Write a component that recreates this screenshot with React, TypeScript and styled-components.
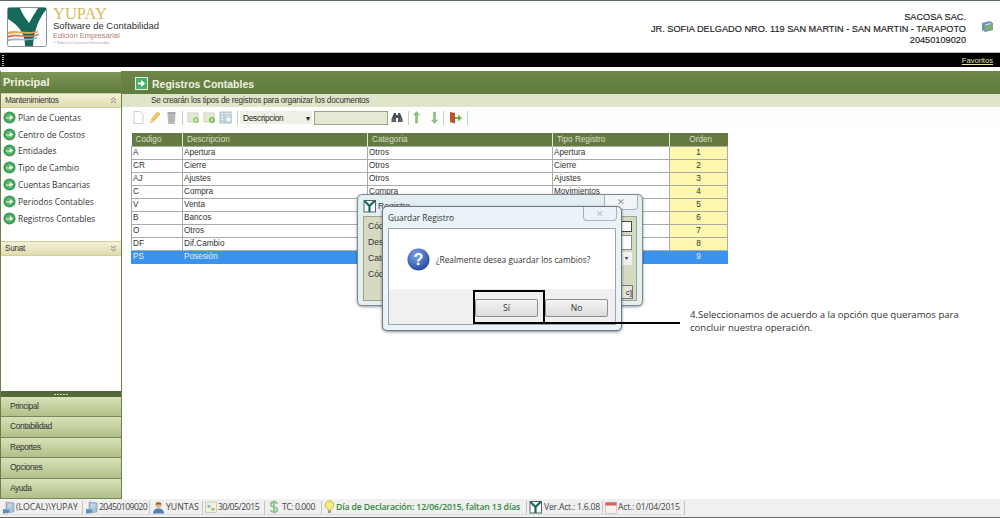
import React from 'react';
import styled, {createGlobalStyle} from 'styled-components';

const GlobalStyle = createGlobalStyle`
    html, body {
        margin: 0;
        padding: 0;
        background: #fff;
    }
`;

const Page = styled.div`
    position: relative;
    width: 1000px;
    height: 518px;
    overflow: hidden;
    display: flex;
    flex-direction: column;
    font-family: "Liberation Sans", Arial, sans-serif;
    color: #222;
    background: #fff;
`;

const TopEdge = styled.div`
    height: 1px;
    background: #5d6a6a;
`;

const Header = styled.header`
    height: 52px;
    display: flex;
    justify-content: space-between;
    padding: 6px 6px 0 7px;
    box-sizing: border-box;
    border-bottom: 1px solid #bbb;
`;

const Brand = styled.div`
    display: flex;
    gap: 6px;
`;

const BrandText = styled.div`
    display: flex;
    flex-direction: column;
`;

const BrandName = styled.div`
    font-family: "Liberation Serif", serif;
    font-size: 16.5px;
    line-height: 14px;
    color: #d8bb5c;
`;

const BrandLine = styled.div`
    font-size: 9.5px;
    line-height: 10px;
    color: #333;
`;

const BrandEdition = styled.div`
    font-size: 7.5px;
    line-height: 9px;
    color: #b5806e;
`;

const BrandSmall = styled.div`
    font-size: 3.7px;
    line-height: 6px;
    color: #b99;
`;

const Company = styled.div`
    display: flex;
    gap: 15px;
    align-items: flex-start;
`;

const CompanyText = styled.div`
    text-align: right;
    font-size: 9.2px;
    line-height: 11.6px;
    color: #222;
    -webkit-text-stroke: 0.15px #222;
    padding-top: 5px;
`;

const CompanyIconSlot = styled.div`
    padding-top: 12px;
`;

const BlackBar = styled.div`
    height: 14px;
    background: #000;
    display: flex;
    justify-content: space-between;
    align-items: center;
    padding: 0 7px 0 2px;
`;

const Grip = styled.div`
    width: 2px;
    height: 11px;
    background: repeating-linear-gradient(#bbb 0 1px, transparent 1px 2px);
`;

const Favoritos = styled.a`
    font-size: 7.6px;
    color: #e8e3a8;
    text-decoration: underline;
`;

const Body = styled.div`
    flex: 1;
    display: flex;
    margin-top: 4px;
    min-height: 0;
`;

const Sidebar = styled.aside`
    width: 122px;
    flex: none;
    display: flex;
    flex-direction: column;
    box-sizing: border-box;
    border-left: 1px solid #6b7f4e;
    border-right: 1px solid #6b7f4e;
`;

const SidebarTitle = styled.div`
    height: 21px;
    margin-top: 1px;
    background: linear-gradient(#7e9657, #5f7a3e);
    color: #eef3df;
    font-size: 11px;
    font-weight: bold;
    line-height: 21px;
    padding-left: 2px;
`;

const Section = styled.div`
    height: 15px;
    display: flex;
    justify-content: space-between;
    align-items: center;
    padding: 0 4px 0 4px;
    background: linear-gradient(#f5f1d8, #dfdcae);
    border-top: 1px solid #cfcf9f;
    border-bottom: 1px solid #cfcf9f;
    box-sizing: border-box;
    font-size: 8.2px;
    letter-spacing: -0.3px;
    color: #333;
`;

const ItemList = styled.div`
    height: 133px;
    padding-top: 1px;
    display: flex;
    flex-direction: column;
    box-sizing: border-box;
`;

const Item = styled.div`
    height: 16.8px;
    display: flex;
    align-items: center;
    gap: 2px;
    padding-left: 2px;
    font-family: "Open Sans", sans-serif;
    font-size: 8.4px;
    color: #333;
`;

const SidebarSpace = styled.div`
    flex: 1;
`;

const Splitter = styled.div`
    height: 6px;
    background: #54693a;
    display: flex;
    justify-content: center;
    align-items: center;
`;

const SplitterDots = styled.div`
    width: 14px;
    height: 1px;
    background: repeating-linear-gradient(90deg, #d8dcc8 0 2px, transparent 2px 3px);
`;

const NavButton = styled.div`
    height: 20.4px;
    box-sizing: border-box;
    background: linear-gradient(#d9e2b8, #b0c088);
    border-bottom: 1px solid #77875a;
    font-size: 8.4px;
    letter-spacing: -0.4px;
    line-height: 19px;
    padding-left: 9px;
    color: #333;
`;

const Main = styled.main`
    flex: 1;
    display: flex;
    flex-direction: column;
    min-width: 0;
`;

const MainTitle = styled.div`
    height: 23px;
    padding: 2px 0 0 13px;
    box-sizing: border-box;
    background: linear-gradient(#6d8549, #627c40);
    display: flex;
    align-items: center;
    gap: 4px;
    color: #eef3e0;
    font-size: 10.5px;
    font-weight: bold;
`;

const MainSubtitle = styled.div`
    height: 13px;
    background: #dfe5c8;
    font-size: 8.2px;
    letter-spacing: -0.22px;
    line-height: 13px;
    padding-left: 29px;
    color: #333;
`;

const Toolbar = styled.div`
    height: 21px;
    display: flex;
    align-items: center;
    padding-left: 11px;
    background: #fdfdfb;
`;

const Tool = styled.div<{$left: number}>`
    display: flex;
    margin-left: ${(p) => p.$left}px;
`;

const ToolSep = styled.div<{$left: number}>`
    width: 1px;
    height: 14px;
    background: #ccc;
    margin-left: ${(p) => p.$left}px;
`;

const Combo = styled.div`
    width: 72px;
    height: 13px;
    margin-left: 2px;
    display: flex;
    justify-content: space-between;
    align-items: center;
    background: #eef0e6;
    font-size: 8.4px;
    letter-spacing: -0.3px;
    padding: 0 2px 0 3px;
    box-sizing: border-box;
`;

const SearchBox = styled.div`
    width: 74px;
    height: 14px;
    margin-left: 2px;
    box-sizing: border-box;
    background: #e3e9d3;
    border: 1px solid #9aa48c;
`;

const Content = styled.div`
    flex: 1;
    padding: 5px 0 0 9px;
    min-height: 0;
`;

const Grid = styled.table`
    border-collapse: collapse;
    table-layout: fixed;
    width: 596px;
    font-size: 8.2px;
    color: #333;
`;

const HeadCell = styled.th`
    height: 13px;
    padding: 0 0 0 4px;
    background: #647a41;
    color: #d8dfc8;
    font-weight: normal;
    text-align: left;
    border-left: 1px solid #e0e6d0;
    &:first-child {
        border-left: none;
    }
    &:last-child {
        text-align: center;
    }
`;

const Cell = styled.td<{$selected?: boolean}>`
    height: 12px;
    padding: 0 0 0 1px;
    line-height: 12px;
    background: ${(p) => (p.$selected ? '#3a93ee' : '#fff')};
    color: ${(p) => (p.$selected ? '#e6f0fb' : '#333')};
    border: 1px solid #aaa;
    border-color: ${(p) => (p.$selected ? '#3a93ee' : '#aaa')};
    white-space: nowrap;
    overflow: hidden;
`;

const OrderCell = styled(Cell)`
    background: ${(p) => (p.$selected ? '#3a93ee' : '#fdf8ae')};
    text-align: center;
    padding: 0;
`;

const StatusBar = styled.footer`
    height: 19px;
    display: flex;
    align-items: center;
    gap: 1px;
    padding: 0 0 1px 1px;
    box-sizing: border-box;
    background: #f0f0f0;
    border-bottom: 1px solid #666;
    font-family: "Open Sans", sans-serif;
    font-size: 8.7px;
    color: #444;
`;

const StatusItem = styled.div<{$width: number; $spacing?: number; $accent?: boolean}>`
    width: ${(p) => p.$width}px;
    height: 14px;
    display: flex;
    align-items: center;
    gap: 1px;
    padding-left: 1px;
    box-sizing: border-box;
    border-right: 1px solid #c4c4c4;
    border-bottom: 1px solid #dcdcdc;
    white-space: nowrap;
    letter-spacing: ${(p) => p.$spacing || 0}px;
    color: ${(p) => (p.$accent ? '#2f8a3a' : '#444')};
    font-weight: ${(p) => (p.$accent ? 600 : 400)};
`;

const RegistroDialog = styled.div`
    position: absolute;
    left: 357px;
    top: 194px;
    width: 286px;
    height: 112px;
    box-sizing: border-box;
    padding: 0 5px 4px;
    display: flex;
    flex-direction: column;
    background: #e3eef3;
    border: 1px solid #7e8a90;
    border-radius: 5px;
    box-shadow: 0 1px 3px rgba(0, 0, 0, 0.4);
`;

const RegistroTitle = styled.div`
    height: 21px;
    display: flex;
    align-items: center;
    gap: 1px;
    font-size: 8.6px;
    color: #333;
`;

const CloseButton = styled.div`
    position: absolute;
    top: 0;
    right: 4px;
    width: 34px;
    height: 15px;
    display: flex;
    align-items: center;
    justify-content: center;
    background: #f2f4f5;
    border: 1px solid #a9b2b8;
    border-top: none;
    border-radius: 0 0 4px 4px;
    box-sizing: border-box;
    color: #8d959a;
    font-size: 9px;
`;

const RegistroPanel = styled.div`
    flex: 1;
    background: #d6dac3;
    border: 1px solid #9da38e;
    padding: 1px 4px;
    display: flex;
    flex-direction: column;
    font-size: 8.6px;
    color: #333;
`;

const FormRow = styled.div`
    height: 16px;
    display: flex;
    justify-content: space-between;
    align-items: center;
`;

const FieldCheck = styled.div`
    width: 9px;
    height: 9px;
    border: 1px solid #444;
    background: #fff;
`;

const FieldInput = styled.div`
    width: 11px;
    height: 13px;
    border: 1px solid #8a8a8a;
    background: #fff;
`;

const FieldSelect = styled.div`
    width: 11px;
    height: 13px;
    background: #f1f1f1;
    font-size: 6px;
    text-align: center;
    line-height: 13px;
`;

const FieldButton = styled.div`
    position: absolute;
    right: 9px;
    bottom: 6px;
    width: 16px;
    height: 14px;
    border: 1px solid #777;
    background: #e6e6dc;
    font-size: 8px;
    line-height: 14px;
    text-align: right;
    box-sizing: border-box;
`;

const ConfirmDialog = styled.div`
    position: absolute;
    left: 382px;
    top: 206px;
    width: 240px;
    height: 125px;
    box-sizing: border-box;
    padding: 0 5px 5px;
    display: flex;
    flex-direction: column;
    background: #e9f3f8;
    border: 1px solid #6e7a80;
    border-radius: 5px;
    box-shadow: 0 1px 3px rgba(0, 0, 0, 0.45);
`;

const ConfirmTitle = styled.div`
    height: 21px;
    display: flex;
    align-items: center;
    font-family: "Open Sans", sans-serif;
    font-size: 8.3px;
    color: #333;
`;

const ConfirmClose = styled(CloseButton)`
    height: 14px;
    background: #e9f3f8;
    color: #b5bec4;
`;

const ConfirmBody = styled.div`
    flex: 1;
    display: flex;
    flex-direction: column;
    border: 1px solid #9aa5aa;
    background: #fff;
`;

const ConfirmMessage = styled.div`
    flex: 1;
    display: flex;
    align-items: center;
    gap: 6px;
    padding-left: 18px;
    font-family: "Open Sans", sans-serif;
    font-size: 8.3px;
    color: #333;
`;

const ConfirmFooter = styled.div`
    height: 35px;
    display: flex;
    justify-content: flex-end;
    align-items: center;
    gap: 7px;
    padding: 2px 7px 0 0;
    box-sizing: border-box;
    background: #f0f0f0;
`;

const DialogButton = styled.div`
    width: 63px;
    height: 18px;
    box-sizing: border-box;
    border: 1px solid #8f8f8f;
    border-radius: 2px;
    background: linear-gradient(#f5f5f5, #dcdcdc);
    font-family: "Open Sans", sans-serif;
    font-size: 8.6px;
    line-height: 16px;
    text-align: center;
    color: #333;
`;

const CalloutBox = styled.div`
    position: absolute;
    left: 473px;
    top: 290px;
    width: 72px;
    height: 34px;
    box-sizing: border-box;
    border: 2px solid #000;
`;

const CalloutLine = styled.div`
    position: absolute;
    left: 544px;
    top: 322px;
    width: 136px;
    height: 2px;
    background: #000;
`;

const CalloutText = styled.div`
    position: absolute;
    left: 690px;
    top: 308px;
    width: 290px;
    font-family: "Open Sans", sans-serif;
    font-size: 9.6px;
    line-height: 13px;
    color: #333;
`;

const GoIcon = () => (
    <svg width='13' height='13' viewBox='0 0 12 12'>
        <circle cx='6' cy='6' r='5.6' fill='#3f9a56'/>
        <circle cx='6' cy='6' r='3.9' fill='#58b56c'/>
        <path d='M2.8 6h3.4V3.6L9.6 6 6.2 8.4V6.9H2.8z' fill='#f4f8f0'/>
    </svg>
);

const Chevrons = ({down}: {down?: boolean}) => (
    <svg width='7' height='7' viewBox='0 0 7 7' fill='none' stroke='#777' strokeWidth='0.9'>
        {down ? <path d='M1 1l2.5 2L6 1M1 4l2.5 2L6 4'/> : <path d='M1 3l2.5-2L6 3M1 6l2.5-2L6 6'/>}
    </svg>
);

const LogoMark = () => (
    <svg width='40' height='40' viewBox='0 0 40 40'>
        <rect x='0.5' y='0.5' width='39' height='39' rx='2' fill='#fff' stroke='#8b9598'/>
        <path d='M1 1h12c2 6 6 11 9 15C25 10 29 5 31 1h8v2C33 10 27 22 26 39H18c0-11-4-19-17-27z' fill='#17695b'/>
        <path d='M1 25c8-3 16 2 30-1v1.500c-12 3-20-1-30 2z' fill='#e9a64e'/>
        <path d='M1 28.500c10-3 18 3 31-2v1.500c-12 5-20-1-31 3z' fill='#d9775a'/>
        <path d='M1 32c10-2 18 2 29-2v1.500c-11 4-19 0-29 3z' fill='#8fb7c4'/>
    </svg>
);

const ArrowBadge = () => (
    <svg width='13' height='13' viewBox='0 0 13 13'>
        <rect x='0.5' y='0.5' width='12' height='12' fill='#47b06a' stroke='#e4efd8'/>
        <path d='M3 5.5h3.2V3l4 3.5-4 3.5V7.5H3z' fill='#fff'/>
    </svg>
);

const PageIcon = () => (
    <svg width='11' height='13' viewBox='0 0 11 13'>
        <path d='M1 .5h6l3 3v9H1z' fill='#fff' stroke='#cfcfcf'/>
    </svg>
);

const PencilIcon = () => (
    <svg width='12' height='13' viewBox='0 0 12 13'>
        <path d='M8.5 1l2.5 2-6.5 7.5L1.5 12l.6-3.2z' fill='#f2c75c' stroke='#c99a3c' strokeWidth='.6'/>
        <path d='M1.5 12l.6-3.2 2.4 1.7z' fill='#f3e3c0'/>
    </svg>
);

const TrashIcon = () => (
    <svg width='11' height='13' viewBox='0 0 11 13'>
        <path d='M2 3h7l-.6 9.5H2.6z' fill='#c4c8c4' stroke='#999' strokeWidth='.6'/>
        <rect x='1.5' y='1' width='8' height='2' fill='#aaa'/>
        <path d='M4 4.5v7M5.5 4.5v7M7 4.5v7' stroke='#8a8a8a' strokeWidth='.5'/>
    </svg>
);

const SheetIcon = ({plus}: {plus?: boolean}) => (
    <svg width='13' height='13' viewBox='0 0 13 13'>
        <rect x='1' y='2' width='10' height='9' fill='#eaf0dc' stroke='#b9c3a8' strokeWidth='.7'/>
        <path d='M1 5h10M1 8h10' stroke='#ccd4bc' strokeWidth='.6'/>
        <circle cx='9' cy='9' r='3' fill={plus ? '#7dbc55' : '#9ccb6a'}/>
        <path d='M7.6 9h2.8M9 7.6v2.8' stroke='#fff' strokeWidth='.7'/>
    </svg>
);

const GridIcon = () => (
    <svg width='13' height='13' viewBox='0 0 13 13'>
        <rect x='1' y='1' width='11' height='11' fill='#dce8f0' stroke='#8ba3b5' strokeWidth='.7'/>
        <path d='M1 4h11M1 7h11M1 10h6M5 1v11' stroke='#9db4c4' strokeWidth='.6'/>
        <rect x='7' y='6' width='5' height='5' fill='#f4f8f0' stroke='#7fa3bb' strokeWidth='.5'/>
    </svg>
);

const BinocularsIcon = () => (
    <svg width='12' height='11' viewBox='0 0 12 11'>
        <path d='M3 1h2v2h2V1h2l2.5 6v3H7V6H5v4H.5V7z' fill='#4d5257'/>
        <path d='M1.5 8h2M8.5 8h2' stroke='#aab' strokeWidth='.8'/>
    </svg>
);

const VArrowIcon = ({down}: {down?: boolean}) => (
    <svg width='11' height='13' viewBox='0 0 11 13'>
        <path
            d={down ? 'M4.500 1h2v8h2l-3 3.500-3-3.500h2z' : 'M4.500 12h2V4h2l-3-3.500-3 3.500h2z'}
            fill='#8cc47c'
            stroke='#6aa35c'
            strokeWidth='.4'
        />
    </svg>
);

const ExitIcon = () => (
    <svg width='14' height='13' viewBox='0 0 14 13'>
        <path d='M1 1l5 1v10.500l-5-1.500z' fill='#b4552e'/>
        <path d='M6 6h3V3.500L13 7l-4 3.500V8H6z' fill='#69b548'/>
    </svg>
);

const ServerIcon = () => (
    <svg width='13' height='13' viewBox='0 0 13 13'>
        <path d='M4 1l8 1v9l-8 1z' fill='#a9c2d8' stroke='#6f8aa3' strokeWidth='.5'/>
        <path d='M1 8l7 1-2 3-5 .5z' fill='#5c8fbd'/>
        <path d='M6 4h4M6 6h4' stroke='#e4eef5' strokeWidth='.8'/>
    </svg>
);

const CompanyIcon = () => (
    <svg width='13' height='13' viewBox='0 0 13 13'>
        <path d='M1 3l8-2 3 2v7l-8 2-3-2z' fill='#6d93b8'/>
        <path d='M4 6l8-2v5l-8 2z' fill='#7bb168'/>
        <path d='M4 5l6-1.500' stroke='#dce8f2'/>
    </svg>
);

const UserIcon = () => (
    <svg width='13' height='13' viewBox='0 0 13 13'>
        <circle cx='6.500' cy='4' r='3' fill='#e3b58a'/>
        <path d='M3.500 3.500c0-3 6-3 6 0z' fill='#9a5a35'/>
        <path d='M1 12.500c0-4 3-5 5.500-5s5.500 1 5.500 5z' fill='#4f7fb4'/>
    </svg>
);

const CalendarIcon = () => (
    <svg width='12' height='12' viewBox='0 0 12 12'>
        <rect x='.5' y='1' width='11' height='10.500' fill='#f4f0d8' stroke='#b7b29a' strokeWidth='.6'/>
        <rect x='2.500' y='4' width='3' height='2.500' fill='#7cb4d8'/>
        <rect x='6.500' y='7' width='3' height='2.500' fill='#8cc47c'/>
    </svg>
);

const DollarIcon = () => (
    <svg width='14' height='14' viewBox='0 0 12 14'>
        <path
            d='M9.500 3.500C8.500 2.500 7.500 2 6 2 4 2 2.700 3 2.700 4.500S4 6.500 6 7s3.300 1.200 3.300 2.700S8 12 6 12c-1.600 0-2.800-.6-3.700-1.700M6 .5v13'
            fill='none'
            stroke='#8cc48c'
            strokeWidth='1.800'
        />
    </svg>
);

const BulbIcon = () => (
    <svg width='11' height='14' viewBox='0 0 11 14'>
        <path d='M5.500.8a4.300 4.300 0 0 0-2.200 8c.5.400.7.900.7 1.400h3c0-.5.200-1 .7-1.400a4.300 4.300 0 0 0-2.200-8z' fill='#f4ec7a' stroke='#b8a83a' strokeWidth='.7'/>
        <rect x='4' y='10.500' width='3' height='2.500' fill='#9a9a8a'/>
    </svg>
);

const CheckDocIcon = () => (
    <svg width='14' height='14' viewBox='0 0 14 14'>
        <rect x='1' y='1.500' width='11.500' height='11.500' fill='#fff' stroke='#56606a' strokeWidth='1'/>
        <path d='M1.500 2l5 5 5.500-5.500M6.500 7v6' stroke='#17695b' strokeWidth='2.200' fill='none'/>
    </svg>
);

const DateIcon = () => (
    <svg width='12' height='13' viewBox='0 0 12 13'>
        <rect x='.5' y='1.500' width='11' height='11' fill='#f6f0ee' stroke='#c9b0ac' strokeWidth='.6'/>
        <rect x='.5' y='1.500' width='11' height='3' fill='#d95f5a'/>
        <path d='M3 .5v2M6 .5v2M9 .5v2' stroke='#999' strokeWidth='.6'/>
    </svg>
);

const QuestionIcon = () => (
    <svg width='23' height='23' viewBox='0 0 23 23'>
        <defs>
            <radialGradient id='qfill' cx='0.4' cy='0.3' r='0.8'>
                <stop offset='0' stopColor='#7ea4ea'/>
                <stop offset='1' stopColor='#1b3f9a'/>
            </radialGradient>
        </defs>
        <circle cx='11.500' cy='11.500' r='11' fill='url(#qfill)'/>
        <text x='11.500' y='17' textAnchor='middle' fontFamily='"Liberation Sans", sans-serif' fontSize='16' fontWeight='bold' fill='#fff'>{'?'}</text>
    </svg>
);

const items = ['Plan de Cuentas', 'Centro de Costos', 'Entidades', 'Tipo de Cambio', 'Cuentas Bancarias', 'Periodos Contables', 'Registros Contables'];
const navButtons = ['Principal', 'Contabilidad', 'Reportes', 'Opciones', 'Ayuda'];

// cells that the dialogs cover in the screenshot are left empty
const rows = [
    ['A', 'Apertura', 'Otros', 'Apertura'],
    ['CR', 'Cierre', 'Otros', 'Cierre'],
    ['AJ', 'Ajustes', 'Otros', 'Ajustes'],
    ['C', 'Compra', 'Compra', 'Movimientos'],
    ['V', 'Venta', '', ''],
    ['B', 'Bancos', '', ''],
    ['O', 'Otros', '', ''],
    ['DF', 'Dif.Cambio', '', ''],
    ['PS', 'Posesión', '', ''],
];

const App = () => {
    return (
        <Page>
            <GlobalStyle/>
            <TopEdge/>
            <Header>
                <Brand>
                    <LogoMark/>
                    <BrandText>
                        <BrandName>{'YUPAY'}</BrandName>
                        <BrandLine>{'Software de Contabilidad'}</BrandLine>
                        <BrandEdition>{'Edición Empresarial'}</BrandEdition>
                        <BrandSmall>{'® Todos los Derechos Reservados'}</BrandSmall>
                    </BrandText>
                </Brand>
                <Company>
                    <CompanyText>
                        <div>{'SACOSA SAC.'}</div>
                        <div>{'JR. SOFIA DELGADO NRO. 119 SAN MARTIN - SAN MARTIN - TARAPOTO'}</div>
                        <div>{'20450109020'}</div>
                    </CompanyText>
                    <CompanyIconSlot><CompanyIcon/></CompanyIconSlot>
                </Company>
            </Header>
            <BlackBar>
                <Grip/>
                <Favoritos>{'Favoritos'}</Favoritos>
            </BlackBar>
            <Body>
                <Sidebar>
                    <SidebarTitle>{'Principal'}</SidebarTitle>
                    <Section>
                        {'Mantenimientos'}
                        <Chevrons/>
                    </Section>
                    <ItemList>
                        {items.map((item) => (
                            <Item key={item}>
                                <GoIcon/>
                                {item}
                            </Item>
                        ))}
                    </ItemList>
                    <Section>
                        {'Sunat'}
                        <Chevrons down={true}/>
                    </Section>
                    <SidebarSpace/>
                    <Splitter><SplitterDots/></Splitter>
                    {navButtons.map((label) => (
                        <NavButton key={label}>{label}</NavButton>
                    ))}
                </Sidebar>
                <Main>
                    <MainTitle>
                        <ArrowBadge/>
                        {'Registros Contables'}
                    </MainTitle>
                    <MainSubtitle>{'Se crearán los tipos de registros para organizar los documentos'}</MainSubtitle>
                    <Toolbar>
                        <Tool $left={0}><PageIcon/></Tool>
                        <Tool $left={5}><PencilIcon/></Tool>
                        <Tool $left={5}><TrashIcon/></Tool>
                        <ToolSep $left={5}/>
                        <Tool $left={4}><SheetIcon/></Tool>
                        <Tool $left={3}><SheetIcon plus={true}/></Tool>
                        <Tool $left={3}><GridIcon/></Tool>
                        <ToolSep $left={5}/>
                        <Combo>
                            {'Descripcion'}
                            <span>{'▾'}</span>
                        </Combo>
                        <SearchBox/>
                        <Tool $left={3}><BinocularsIcon/></Tool>
                        <ToolSep $left={5}/>
                        <Tool $left={2}><VArrowIcon/></Tool>
                        <Tool $left={7}><VArrowIcon down={true}/></Tool>
                        <ToolSep $left={3}/>
                        <Tool $left={5}><ExitIcon/></Tool>
                        <ToolSep $left={4}/>
                    </Toolbar>
                    <Content>
                        <Grid>
                            <colgroup>
                                <col width='51'/>
                                <col width='185'/>
                                <col width='185'/>
                                <col width='117'/>
                                <col width='58'/>
                            </colgroup>
                            <thead>
                                <tr>
                                    <HeadCell>{'Codigo'}</HeadCell>
                                    <HeadCell>{'Descripcion'}</HeadCell>
                                    <HeadCell>{'Categoria'}</HeadCell>
                                    <HeadCell>{'Tipo Registro'}</HeadCell>
                                    <HeadCell>{'Orden'}</HeadCell>
                                </tr>
                            </thead>
                            <tbody>
                                {rows.map((row, index) => {
                                    const selected = index === rows.length - 1;
                                    return (
                                        <tr key={row[0]}>
                                            {row.map((value, column) => (
                                                <Cell key={column} $selected={selected}>{value}</Cell>
                                            ))}
                                            <OrderCell $selected={selected}>{index + 1}</OrderCell>
                                        </tr>
                                    );
                                })}
                            </tbody>
                        </Grid>
                    </Content>
                </Main>
            </Body>
            <StatusBar>
                <StatusItem $width={82}><ServerIcon/>{'(LOCAL)\\YUPAY'}</StatusItem>
                <StatusItem $width={66} $spacing={-0.6}><ServerIcon/>{'20450109020'}</StatusItem>
                <StatusItem $width={52}><UserIcon/>{'YUNTAS'}</StatusItem>
                <StatusItem $width={61} $spacing={-0.5}><CalendarIcon/>{'30/05/2015'}</StatusItem>
                <StatusItem $width={56} $spacing={-0.45}><DollarIcon/>{'TC: 0.000'}</StatusItem>
                <StatusItem $width={204} $spacing={-0.13} $accent={true}><BulbIcon/>{'Día de Declaración: 12/06/2015, faltan 13 días'}</StatusItem>
                <StatusItem $width={75} $spacing={-0.25}><CheckDocIcon/>{'Ver.Act.: 1.6.08'}</StatusItem>
                <StatusItem $width={81} $spacing={-0.25}><DateIcon/>{'Act.: 01/04/2015'}</StatusItem>
            </StatusBar>
            <RegistroDialog>
                <RegistroTitle>
                    <CheckDocIcon/>
                    {'Registro'}
                </RegistroTitle>
                <CloseButton>{'✕'}</CloseButton>
                <RegistroPanel>
                    <FormRow>{'Cód'}<FieldCheck/></FormRow>
                    <FormRow>{'Des'}<FieldInput/></FormRow>
                    <FormRow>{'Cate'}<FieldSelect>{'▾'}</FieldSelect></FormRow>
                    <FormRow>{'Cód'}</FormRow>
                </RegistroPanel>
                <FieldButton>{'c]'}</FieldButton>
            </RegistroDialog>
            <ConfirmDialog>
                <ConfirmTitle>{'Guardar Registro'}</ConfirmTitle>
                <ConfirmClose>{'✕'}</ConfirmClose>
                <ConfirmBody>
                    <ConfirmMessage>
                        <QuestionIcon/>
                        {'¿Realmente desea guardar los cambios?'}
                    </ConfirmMessage>
                    <ConfirmFooter>
                        <DialogButton>{'Sí'}</DialogButton>
                        <DialogButton>{'No'}</DialogButton>
                    </ConfirmFooter>
                </ConfirmBody>
            </ConfirmDialog>
            <CalloutBox/>
            <CalloutLine/>
            <CalloutText>{'4.Seleccionamos de acuerdo a la opción que queramos para concluir nuestra operación.'}</CalloutText>
        </Page>
    );
};

export default App;
